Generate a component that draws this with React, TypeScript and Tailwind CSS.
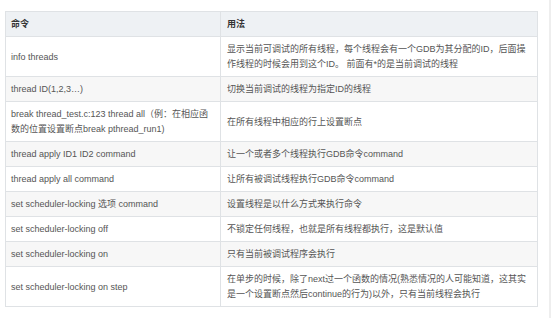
import React from "react";

const rows: [React.ReactNode, React.ReactNode][] = [
  [
    "info threads",
    <>
      显示当前可调试的所有线程，每个线程会有一个GDB为其分配的ID，后面操
      <br />
      作线程的时候会用到这个ID。 前面有*的是当前调试的线程
    </>,
  ],
  ["thread ID(1,2,3…)", "切换当前调试的线程为指定ID的线程"],
  [
    <>
      break thread_test.c:123 thread all（例：在相应函
      <br />
      数的位置设置断点break pthread_run1)
    </>,
    "在所有线程中相应的行上设置断点",
  ],
  ["thread apply ID1 ID2 command", "让一个或者多个线程执行GDB命令command"],
  ["thread apply all command", "让所有被调试线程执行GDB命令command"],
  ["set scheduler-locking 选项 command", "设置线程是以什么方式来执行命令"],
  ["set scheduler-locking off", "不锁定任何线程，也就是所有线程都执行，这是默认值"],
  ["set scheduler-locking on", "只有当前被调试程序会执行"],
  [
    "set scheduler-locking on step",
    <>
      在单步的时候，除了next过一个函数的情况(熟悉情况的人可能知道，这其实
      <br />
      是一个设置断点然后continue的行为)以外，只有当前线程会执行
    </>,
  ],
];

export default function App() {
  return (
    <div
      className="w-[554px] h-[318px] bg-white flex overflow-hidden"
      style={{ fontFamily: '"Liberation Sans", "Noto Sans CJK SC", sans-serif' }}
    >
      <div className="pl-[5px] pt-[11px]">
        <table className="w-[532px] border-collapse text-[9px] leading-[15px] table-fixed">
          <colgroup>
            <col className="w-[215px]" />
            <col className="w-[317px]" />
          </colgroup>
          <thead>
            <tr className="bg-[#eef1f4]">
              <th className="border border-[#dfe2e5] text-left font-bold text-[#333] px-[5px] pt-[5px] pb-[4px] h-[25px]">
                命令
              </th>
              <th className="border border-[#dfe2e5] text-left font-bold text-[#333] px-[6px] pt-[5px] pb-[4px] h-[25px]">
                用法
              </th>
            </tr>
          </thead>
          <tbody>
            {rows.map(([a, b], i) => (
              <tr key={i} className={i % 2 === 1 ? "bg-[#f7f7f7]" : "bg-white"}>
                <td className="border border-[#dfe2e5] text-[#555] px-[5px] pt-[5px] pb-[4px] align-middle whitespace-nowrap">
                  {a}
                </td>
                <td className="border border-[#dfe2e5] text-[#555] px-[6px] pt-[5px] pb-[4px] align-middle whitespace-nowrap">
                  {b}
                </td>
              </tr>
            ))}
          </tbody>
        </table>
      </div>
      <div className="ml-[11px] w-[2px] h-[318px] bg-[#eeeeee]" />
    </div>
  );
}
